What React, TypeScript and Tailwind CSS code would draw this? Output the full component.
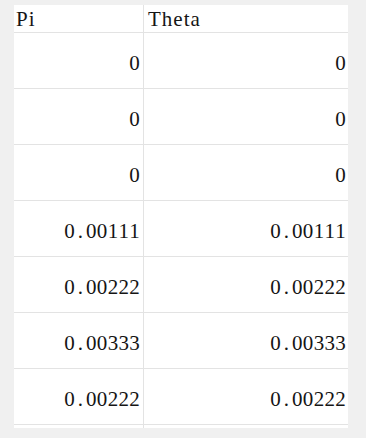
const rows = ["0", "0", "0", "0.00111", "0.00222", "0.00333", "0.00222"];

// SimSun-like look: serif glyphs set on a fixed half-width grid
function Mono({ text }: { text: string }) {
  return (
    <span className="flex">
      {text.split("").map((c, i) => (
        <span key={i} className="inline-block w-[10.85px] text-center">
          {c}
        </span>
      ))}
    </span>
  );
}

export default function App() {
  return (
    <div className="h-[438px] w-[366px] overflow-hidden bg-[#f0f0f0] pl-[14px] pt-[5px] font-['Liberation_Serif',serif] text-[21px] leading-none text-[#151515]">
      <div className="w-[334px] bg-white">
        {/* header */}
        <div className="flex h-[28px] border-b border-[#e3e3e3]">
          <div className="flex w-[130px] items-center border-r border-[#e3e3e3] pl-[2px] pt-[2px] tracking-[1px]">
            Pi
          </div>
          <div className="flex flex-1 items-center pl-[4px] pt-[2px] tracking-[1px]">
            Theta
          </div>
        </div>
        {rows.map((v, i) => (
          <div key={i} className="flex h-[56px] border-b border-[#e3e3e3]">
            <div className="flex w-[130px] items-center justify-end border-r border-[#e3e3e3] pr-[3px] pt-[5px]">
              <Mono text={v} />
            </div>
            <div className="flex flex-1 items-center justify-end pr-[2px] pt-[5px]">
              <Mono text={v} />
            </div>
          </div>
        ))}
        <div className="flex h-[3px]">
          <div className="w-[130px] border-r border-[#e3e3e3]" />
        </div>
      </div>
    </div>
  );
}
